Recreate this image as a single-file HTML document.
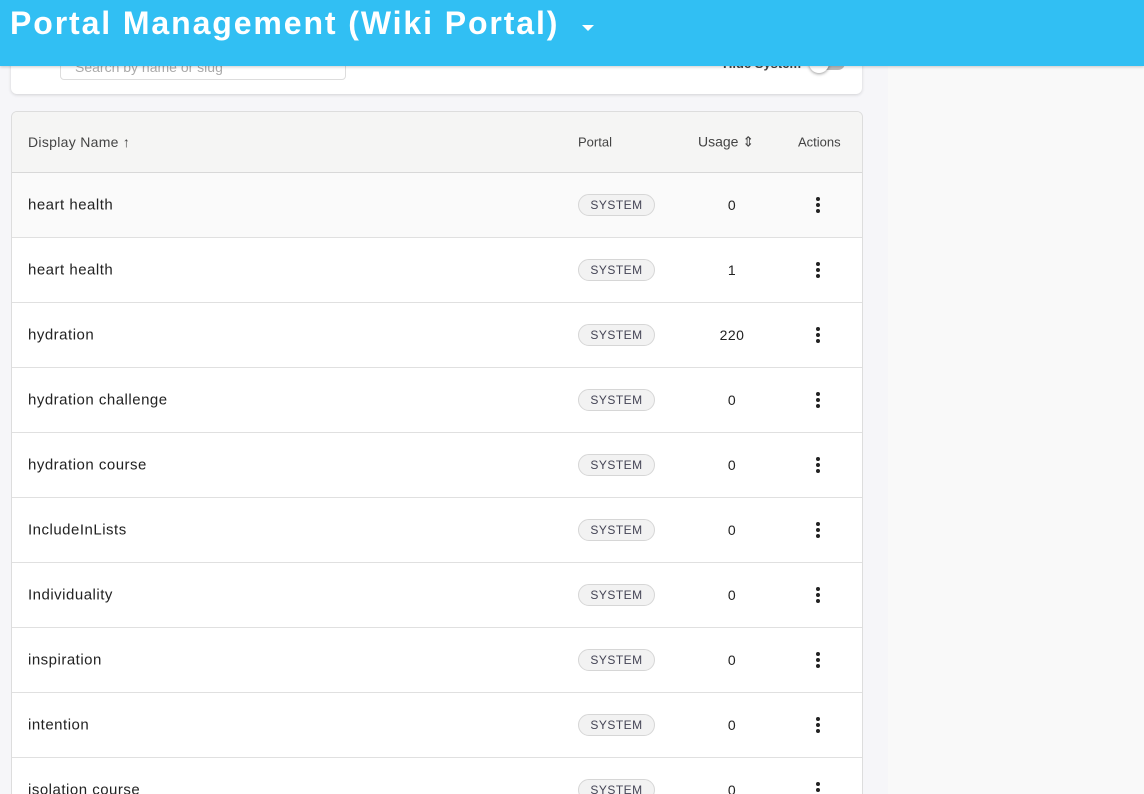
<!DOCTYPE html>
<html><head><style>
html,body{margin:0;width:1144px;height:794px;overflow:hidden}
body{font-family:"Liberation Sans",sans-serif;background:#f9f9f9;position:relative}
.main{position:absolute;left:0;top:0;width:888px;height:794px;background:#f6f6f9}
.top{position:absolute;left:0;top:0;width:1144px;height:66px;background:#31bff3;box-shadow:0 1px 3px rgba(0,0,0,.2);z-index:5}
.top h1{margin:0;position:absolute;left:10px;top:5px;font-size:32px;font-weight:bold;color:#fff;letter-spacing:1.9px;white-space:nowrap}
.tri{position:absolute;left:582px;top:25px;width:0;height:0;border-left:6px solid transparent;border-right:6px solid transparent;border-top:6px solid #fff}
.filter{position:absolute;left:11px;top:30px;width:851px;height:64px;background:#fff;border-radius:6px;box-shadow:0 1px 3px rgba(0,0,0,.15)}
.search{position:absolute;left:49px;top:20px;width:286px;height:30px;border:1px solid #ddd;border-radius:4px;box-sizing:border-box;padding:8px 14px;font-size:14px;color:#aaa}
.hide{position:absolute;left:712px;top:26px;font-size:13px;font-weight:bold;color:#444}
.tog{position:absolute;left:800px;top:26px;width:34px;height:14px;border-radius:7px;background:#bbb}
.tog:after{content:"";position:absolute;left:-2px;top:-3px;width:20px;height:20px;border-radius:50%;background:#fff;box-shadow:0 1px 3px rgba(0,0,0,.4)}
.table{position:absolute;left:11px;top:111px;width:850px;height:700px;background:#fff;border:1px solid #ddd;border-radius:6px;overflow:hidden}
.head{height:60px;background:#f5f5f4;border-bottom:1px solid #d8d8d8;position:relative;font-size:14px;color:#444}
.row{height:64px;border-bottom:1px solid #e0e0e0;position:relative;font-size:15px;color:#222;letter-spacing:.5px}
.c{position:absolute;top:50%;transform:translateY(-50%);white-space:nowrap}
.badge{position:absolute;left:566px;top:21px;width:75px;height:20px;border:1px solid #d6d6d6;border-radius:11px;background:#f2f2f2;font-size:12px;color:#445;text-align:center;line-height:20px;letter-spacing:.5px}
.num{position:absolute;left:690px;width:60px;text-align:center;top:50%;transform:translateY(-50%);font-size:14px}
.dots{position:absolute;left:804px;top:24px;width:4px}
.dots i{display:block;width:4px;height:4px;border-radius:50%;background:#222;margin-bottom:2px}
</style></head><body>
<div class="main"></div>
<div class="top"><h1>Portal Management (Wiki Portal)</h1><div class="tri"></div></div>
<div class="filter"><div class="search">Search by name or slug</div><span class="hide">Hide System</span><div class="tog"></div></div>
<div class="table">
<div class="head"><span class="c" style="left:16px;letter-spacing:.3px">Display Name ↑</span><span class="c" style="left:566px;font-size:13px">Portal</span><span class="c" style="left:686px">Usage ⇕</span><span class="c" style="left:786px;font-size:13px">Actions</span></div>
<div class="row" style="background:#fafafa"><span class="c" style="left:16px">heart health</span><div class="badge">SYSTEM</div><div class="num">0</div><div class="dots"><i></i><i></i><i></i></div></div>
<div class="row"><span class="c" style="left:16px">heart health</span><div class="badge">SYSTEM</div><div class="num">1</div><div class="dots"><i></i><i></i><i></i></div></div>
<div class="row"><span class="c" style="left:16px">hydration</span><div class="badge">SYSTEM</div><div class="num">220</div><div class="dots"><i></i><i></i><i></i></div></div>
<div class="row"><span class="c" style="left:16px">hydration challenge</span><div class="badge">SYSTEM</div><div class="num">0</div><div class="dots"><i></i><i></i><i></i></div></div>
<div class="row"><span class="c" style="left:16px">hydration course</span><div class="badge">SYSTEM</div><div class="num">0</div><div class="dots"><i></i><i></i><i></i></div></div>
<div class="row"><span class="c" style="left:16px">IncludeInLists</span><div class="badge">SYSTEM</div><div class="num">0</div><div class="dots"><i></i><i></i><i></i></div></div>
<div class="row"><span class="c" style="left:16px">Individuality</span><div class="badge">SYSTEM</div><div class="num">0</div><div class="dots"><i></i><i></i><i></i></div></div>
<div class="row"><span class="c" style="left:16px">inspiration</span><div class="badge">SYSTEM</div><div class="num">0</div><div class="dots"><i></i><i></i><i></i></div></div>
<div class="row"><span class="c" style="left:16px">intention</span><div class="badge">SYSTEM</div><div class="num">0</div><div class="dots"><i></i><i></i><i></i></div></div>
<div class="row"><span class="c" style="left:16px">isolation course</span><div class="badge">SYSTEM</div><div class="num">0</div><div class="dots"><i></i><i></i><i></i></div></div>
</div>
</body></html>
